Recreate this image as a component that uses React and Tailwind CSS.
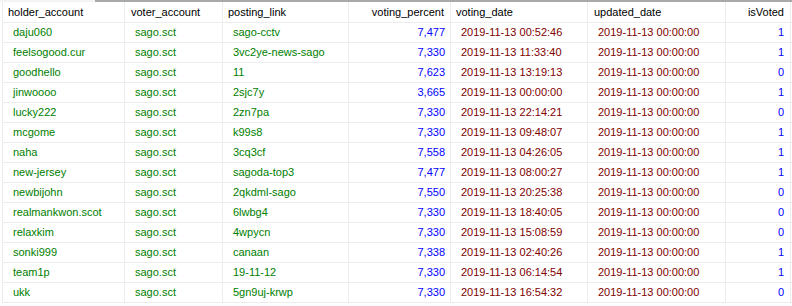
import React from 'react';

const rows = [
    ['daju060', 'sago.sct', 'sago-cctv', '7,477', '2019-11-13 00:52:46', '2019-11-13 00:00:00', '1'],
    ['feelsogood.cur', 'sago.sct', '3vc2ye-news-sago', '7,330', '2019-11-13 11:33:40', '2019-11-13 00:00:00', '1'],
    ['goodhello', 'sago.sct', '11', '7,623', '2019-11-13 13:19:13', '2019-11-13 00:00:00', '0'],
    ['jinwoooo', 'sago.sct', '2sjc7y', '3,665', '2019-11-13 00:00:00', '2019-11-13 00:00:00', '1'],
    ['lucky222', 'sago.sct', '2zn7pa', '7,330', '2019-11-13 22:14:21', '2019-11-13 00:00:00', '0'],
    ['mcgome', 'sago.sct', 'k99s8', '7,330', '2019-11-13 09:48:07', '2019-11-13 00:00:00', '1'],
    ['naha', 'sago.sct', '3cq3cf', '7,558', '2019-11-13 04:26:05', '2019-11-13 00:00:00', '1'],
    ['new-jersey', 'sago.sct', 'sagoda-top3', '7,477', '2019-11-13 08:00:27', '2019-11-13 00:00:00', '1'],
    ['newbijohn', 'sago.sct', '2qkdml-sago', '7,550', '2019-11-13 20:25:38', '2019-11-13 00:00:00', '0'],
    ['realmankwon.scot', 'sago.sct', '6lwbg4', '7,330', '2019-11-13 18:40:05', '2019-11-13 00:00:00', '0'],
    ['relaxkim', 'sago.sct', '4wpycn', '7,330', '2019-11-13 15:08:59', '2019-11-13 00:00:00', '0'],
    ['sonki999', 'sago.sct', 'canaan', '7,338', '2019-11-13 02:40:26', '2019-11-13 00:00:00', '1'],
    ['team1p', 'sago.sct', '19-11-12', '7,330', '2019-11-13 06:14:54', '2019-11-13 00:00:00', '1'],
    ['ukk', 'sago.sct', '5gn9uj-krwp', '7,330', '2019-11-13 16:54:32', '2019-11-13 00:00:00', '0'],
];

function App() {
    return (
        <div className="w-[792px] h-[306px] overflow-hidden bg-white text-[11px] leading-none" style={{ fontFamily: '"Liberation Sans", Arial, sans-serif' }}>
            {/* strip above the header */}
            <div className="flex h-[2px]">
                <div className="w-[95px] bg-[#f4f4f4]"></div>
                <div className="flex-1 bg-[#a9a9a9]"></div>
            </div>
            <div className="ml-[2px] border-l border-[#ececec]">
                <div className="flex h-[21px] border-b border-[#ececec] text-black">
                    <div className="w-[122px] shrink-0 border-r border-[#ececec] pl-[5px] flex items-center">holder_account</div>
                    <div className="w-[98px] shrink-0 border-r border-[#ececec] pl-[6px] flex items-center">voter_account</div>
                    <div className="w-[126px] shrink-0 border-r border-[#ececec] pl-[5px] flex items-center">posting_link</div>
                    <div className="w-[102px] shrink-0 border-r border-[#ececec] pr-[6px] flex items-center justify-end">voting_percent</div>
                    <div className="w-[137px] shrink-0 border-r border-[#ececec] pl-[5px] flex items-center">voting_date</div>
                    <div className="w-[138px] shrink-0 border-r border-[#ececec] pl-[6px] flex items-center">updated_date</div>
                    <div className="w-[65px] shrink-0 border-r border-[#ececec] pr-[6px] flex items-center justify-end">isVoted</div>
                </div>
                {rows.map((r, i) => (
                    <div key={i} className="flex h-[20px] border-b border-[#ececec]">
                        <div className="w-[122px] shrink-0 border-r border-[#ececec] pl-[10px] flex items-center text-[#008000]">{r[0]}</div>
                        <div className="w-[98px] shrink-0 border-r border-[#ececec] pl-[10px] flex items-center text-[#008000]">{r[1]}</div>
                        <div className="w-[126px] shrink-0 border-r border-[#ececec] pl-[10px] flex items-center text-[#008000]">{r[2]}</div>
                        <div className="w-[102px] shrink-0 border-r border-[#ececec] pr-[5px] flex items-center justify-end text-[#0000ff]">{r[3]}</div>
                        <div className="w-[137px] shrink-0 border-r border-[#ececec] pl-[10px] flex items-center text-[#800000]">{r[4]}</div>
                        <div className="w-[138px] shrink-0 border-r border-[#ececec] pl-[10px] flex items-center text-[#800000]">{r[5]}</div>
                        <div className="w-[65px] shrink-0 border-r border-[#ececec] pr-[6px] flex items-center justify-end text-[#0000ff]">{r[6]}</div>
                    </div>
                ))}
            </div>
        </div>
    );
}

export default App;
